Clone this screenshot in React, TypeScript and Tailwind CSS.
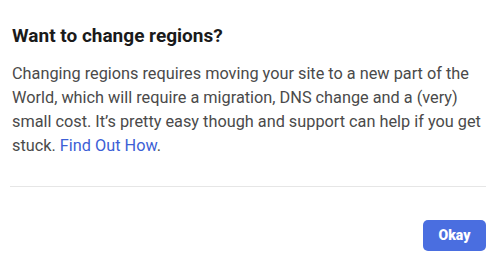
export default function App() {
  return (
    <div className="w-[500px] h-[277px] bg-white font-['Roboto',sans-serif]">
      <div className="px-3 pt-[23px]">
        <h2 className="text-[19px] leading-[26px] font-bold text-[#1a1a1a]">Want to change regions?</h2>
        <p className="mt-[13px] text-[16.3px] leading-[24px] text-[#4a4a4a]">
          Changing regions requires moving your site to a new part of the World, which will require a migration, DNS change and a (very) small cost. It’s pretty easy though and support can help if you get stuck.{" "}
          <a href="#" className="text-[#3d5fd6]">Find Out How</a>.
        </p>
      </div>
      <div className="mx-[10px] mt-[28px] w-[476px] border-t border-[#e6e6e6]" />
      <div className="flex justify-end pr-[14px] pt-[33px]">
        <button className="w-[63px] h-[31px] rounded-[5px] bg-[#4a6ee0] text-white text-[14px] font-black">
          Okay
        </button>
      </div>
    </div>
  );
}
